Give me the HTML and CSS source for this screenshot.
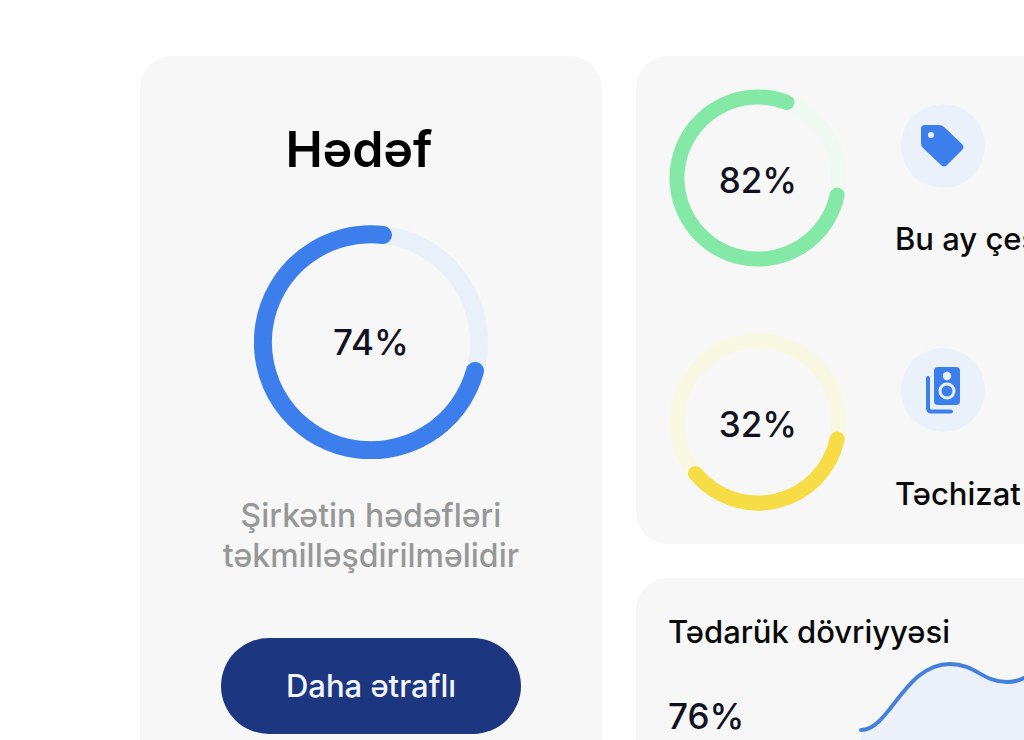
FILE: index.html
```html
<!DOCTYPE html>
<html lang="az">
<head>
    <meta charset="UTF-8">
    <meta name="viewport" content="width=device-width, initial-scale=1.0">
    <title>Hədəf</title>
    <link rel="stylesheet" href="styles.css">
</head>
<body>
    <main class="dashboard">
        <section class="card goal">
            <h1>Hədəf</h1>
            <div class="ring ring-blue">
                <svg width="234" height="234" viewBox="0 0 234 234" aria-hidden="true">
                    <circle class="track" cx="117" cy="117" r="108"/>
                    <path class="value" d="M221 146A108 108 0 1 1 129 10"/>
                </svg>
                <span class="percent">74%</span>
            </div>
            <p>Şirkətin hədəfləri təkmilləşdirilməlidir</p>
            <button type="button" class="more">Daha ətraflı</button>
        </section>

        <div class="column">
            <section class="card stats">
                <div class="stat">
                    <div class="ring ring-green">
                        <svg width="178" height="178" viewBox="0 0 178 178" aria-hidden="true">
                            <circle class="track" cx="89" cy="89" r="81"/>
                            <path class="value" d="M168.200 106A81 81 0 1 1 118 13.400"/>
                        </svg>
                        <span class="percent">82%</span>
                    </div>
                    <div class="info">
                        <svg class="icon" width="84" height="84" viewBox="0 0 84 84" aria-hidden="true">
                            <circle class="disc" cx="42" cy="42" r="42"/>
                            <path class="shape" d="M24 21H38Q41 21 43 23L61 40Q64 43 61 46L46 61Q43 64 40 61L22 44Q20 42 20 39V25Q20 21 24 21Z"/>
                            <circle class="disc" cx="30" cy="31" r="3"/>
                        </svg>
                        <span class="label">Bu ay çeş</span>
                    </div>
                </div>
                <div class="stat supply">
                    <div class="ring ring-yellow">
                        <svg width="178" height="178" viewBox="0 0 178 178" aria-hidden="true">
                            <circle class="track" cx="89" cy="89" r="81"/>
                            <path class="value" d="M168.200 106A81 81 0 0 1 26.500 140.600"/>
                        </svg>
                        <span class="percent">32%</span>
                    </div>
                    <div class="info">
                        <svg class="icon" width="84" height="84" viewBox="0 0 84 84" aria-hidden="true">
                            <circle class="disc" cx="42" cy="42" r="42"/>
                            <rect class="shape" x="33" y="19" width="26" height="38" rx="4"/>
                            <circle class="disc" cx="46" cy="28" r="4.200"/>
                            <circle class="cone" cx="46" cy="43" r="7"/>
                            <path class="stand" d="M27 30V60Q27 63.500 30.500 63.500H50"/>
                        </svg>
                        <span class="label">Təchizat</span>
                    </div>
                </div>
            </section>

            <section class="card turnover">
                <h2>Tədarük dövriyyəsi</h2>
                <div class="trend">
                    <span class="percent">76%</span>
                    <svg class="chart" width="240" height="120" viewBox="0 0 240 120" aria-hidden="true">
                        <path class="area" d="M3 70C32 70 46 4 92 4C118 4 124 22 149 22C172 22 176 4 204 4L240 20V120H3Z"/>
                        <path class="line" d="M3 70C32 70 46 4 92 4C118 4 124 22 149 22C172 22 176 4 204 4L240 20"/>
                    </svg>
                </div>
            </section>
        </div>
    </main>
</body>
</html>
```
FILE: styles.css
```css
* { box-sizing: border-box; }
body { margin: 0; background: #fff; color: #0a0a0a; font-family: Inter, "Liberation Sans", sans-serif; font-size: 31px; line-height: 40px; font-weight: 500; overflow: hidden; }
h1, h2, p { margin: 0; }

.dashboard { display: grid; grid-template-columns: minmax(0, 25fr) minmax(0, 21fr); gap: 34px; padding: 56px 0 0 140px; }
.column { display: flex; flex-direction: column; gap: 34px; }
.card { background: #f7f7f7; border-radius: 32px; }
.column .card { border-radius: 32px 0 0 32px; }

.goal { display: flex; flex-direction: column; align-items: center; padding: 64px 32px; text-align: center; }
.goal h1 { font-size: 50px; line-height: 58px; font-weight: 600; color: #000; margin-bottom: 47px; padding-right: 24px; }
.goal p { width: 320px; font-size: 32px; color: #979797; margin: 37px 0 62px; }
.more { width: 300px; height: 96px; border: none; border-radius: 48px; background: #1c3680; color: #f4f6ff; font: inherit; cursor: pointer; }

.ring { display: grid; place-items: center; flex: none; }
.ring > * { grid-area: 1 / 1; }
.ring svg { display: block; }
.track, .value { fill: none; stroke-width: 15; }
.value { stroke-linecap: round; }
.ring-blue .track, .ring-blue .value { stroke-width: 18; }
.ring-blue .track { stroke: #eaf0fa; }
.ring-blue .value { stroke: #3b7eec; }
.ring-green .track { stroke: #eff8f1; }
.ring-green .value { stroke: #84e9a6; }
.ring-yellow .track { stroke: #f8f7e1; }
.ring-yellow .value { stroke: #f6dc45; }
.percent { font-size: 35px; line-height: 48px; color: #11111f; }

.stats { padding-left: 33px; }
.stat { display: flex; align-items: flex-start; gap: 48px; height: 244px; padding-top: 33px; }
.stat + .stat { border-top: 1px solid #f5f5f5; padding-top: 32px; }
.stat .percent { padding-top: 4px; }
.info { display: flex; flex-direction: column; gap: 31px; padding-top: 15px; }
.supply .info { gap: 42px; }
.icon { margin-left: 6px; flex: none; }
.label { white-space: nowrap; }
.disc { fill: #eaf1fb; }
.shape { fill: #3b7eec; }
.cone { fill: none; stroke: #eaf1fb; stroke-width: 3; }
.stand { fill: none; stroke: #3b7eec; stroke-width: 4; stroke-linecap: round; }

.turnover { padding: 34px 0 32px 32px; }
.turnover h2 { font-size: 31px; line-height: 40px; font-weight: 500; white-space: nowrap; }
.trend { display: flex; gap: 114px; padding-top: 8px; }
.trend .percent { padding-top: 32px; }
.chart { flex: none; }
.area { fill: #ebf0f9; }
.line { fill: none; stroke: #4480dc; stroke-width: 4; stroke-linecap: round; }
```
